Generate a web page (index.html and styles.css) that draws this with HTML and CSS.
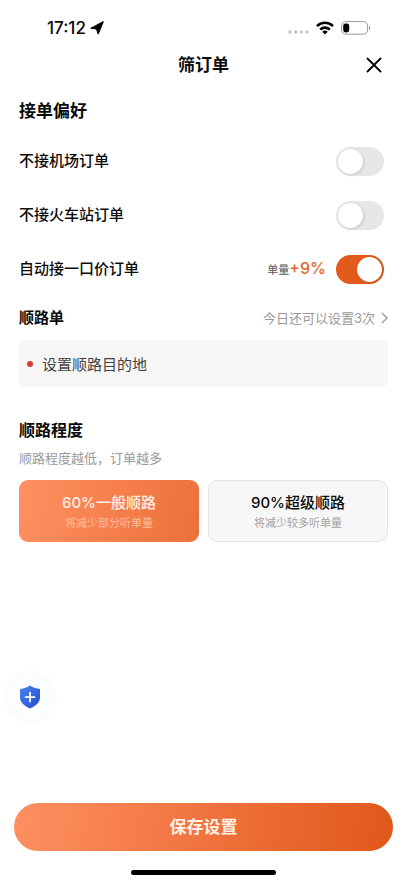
FILE: index.html
```html
<!DOCTYPE html>
<html lang="zh-CN">
<head>
<meta charset="utf-8">
<meta name="viewport" content="width=device-width, initial-scale=1">
<title>筛订单</title>
<link rel="stylesheet" href="styles.css">
</head>
<body>
<div class="screen">
  <div class="status">
    <div class="status-left">
      <span class="time">17:12</span>
      <svg class="location" width="14" height="14" viewBox="0 0 14 14" aria-hidden="true"><path d="M13.200.8 8.200 12.800 6.600 8 1 7.200z" fill="#000" stroke="#000" stroke-width="1.200" stroke-linejoin="round"/></svg>
    </div>
    <div class="status-right">
      <svg width="21" height="4" viewBox="0 0 21 4" aria-hidden="true"><g fill="#c6c6c6"><circle cx="2" cy="2" r="1.8"/><circle cx="7.7" cy="2" r="1.8"/><circle cx="13.3" cy="2" r="1.8"/><circle cx="19" cy="2" r="1.8"/></g></svg>
      <svg class="wifi" width="18" height="14" viewBox="0 0 18 14" aria-hidden="true"><g fill="none" stroke="#000" stroke-width="2.6"><path d="M1 5.1a11.3 11.3 0 0 1 16 0"/><path d="M4.200 8.600a6.800 6.800 0 0 1 9.600 0"/></g><path d="M9 13.6 6.3 10.8a3.8 3.8 0 0 1 5.4 0z"/></svg>
      <svg class="battery" width="30" height="14" viewBox="0 0 30 14" aria-hidden="true"><rect x=".6" y=".6" width="26" height="12.6" rx="4.2" fill="none" stroke="#999"/><rect x="2.2" y="2.4" width="6" height="9" rx="2.4"/><path d="M28 4.8c1.6.8 1.6 3.6 0 4.4z" fill="#888"/></svg>
    </div>
  </div>

  <header class="header">
    <h1>筛订单</h1>
    <button class="close" type="button" aria-label="关闭">
      <svg width="16" height="16" viewBox="0 0 16 16" aria-hidden="true"><path d="M1.5 1.5l13 13M14.5 1.5l-13 13" stroke="#000" stroke-width="1.8" stroke-linecap="round"/></svg>
    </button>
  </header>

  <main class="content">
    <h2 class="title-large">接单偏好</h2>
    <div class="row">
      <label for="airport">不接机场订单</label>
      <input class="switch" type="checkbox" id="airport">
    </div>
    <div class="row">
      <label for="station">不接火车站订单</label>
      <input class="switch" type="checkbox" id="station">
    </div>
    <div class="row">
      <label for="fixed">自动接一口价订单</label>
      <span class="bonus">单量<b>+9%</b></span>
      <input class="switch" type="checkbox" id="fixed" checked>
    </div>

    <div class="route-head">
      <h2>顺路单</h2>
      <a class="more" href="#">今日还可以设置3次
        <svg width="7" height="12" viewBox="0 0 7 12" aria-hidden="true"><path d="M1 1l5 5-5 5" fill="none" stroke="#999" stroke-width="1.4"/></svg>
      </a>
    </div>
    <button class="destination" type="button"><span class="dot"></span>设置顺路目的地</button>

    <h2 class="title-degree">顺路程度</h2>
    <p class="hint">顺路程度越低，订单越多</p>
    <div class="options" role="radiogroup" aria-label="顺路程度">
      <label class="option">
        <input type="radio" name="degree" checked>
        <span class="option-name">60%一般顺路</span>
        <span class="option-note">将减少部分听单量</span>
      </label>
      <label class="option">
        <input type="radio" name="degree">
        <span class="option-name">90%超级顺路</span>
        <span class="option-note">将减少较多听单量</span>
      </label>
    </div>
  </main>

  <button class="safety" type="button" aria-label="安全中心">
    <svg width="22" height="24" viewBox="0 0 22 24" aria-hidden="true">
      <defs><linearGradient id="shield" x1="0" y1="0" x2="1" y2="1"><stop offset="0" stop-color="#4a87ea"/><stop offset="1" stop-color="#2349d0"/></linearGradient></defs>
      <path d="M11 .6C13.4 2.5 17 3.7 21 4v8.5c0 5-4.5 8.8-10 11-5.5-2.2-10-6-10-11V4C5 3.7 8.6 2.5 11 .6z" fill="url(#shield)"/>
      <path d="M11 7.6v9M6.5 12.1h9" stroke="#fff" stroke-width="1.8" stroke-linecap="round"/>
    </svg>
  </button>

  <footer class="footer">
    <button class="save" type="button">保存设置</button>
    <div class="home-bar"></div>
  </footer>
</div>
</body>
</html>
```
FILE: styles.css
```css
* {
  box-sizing: border-box;
}

body {
  margin: 0;
  background: #fff;
  color: #0b0b0b;
  font-family: Inter, "Noto Sans CJK SC", sans-serif;
  font-size: 15px;
}

button {
  border: 0;
  padding: 0;
  font: inherit;
}

h1,
h2,
p {
  margin: 0;
}

h1,
h2 {
  font-weight: 600;
}

.screen {
  position: relative;
  display: flex;
  flex-direction: column;
  min-height: 100vh;
}

.status {
  display: flex;
  justify-content: space-between;
  align-items: center;
  height: 48px;
  padding: 8px 36px 0 47px;
}

.status-left,
.status-right {
  display: flex;
  align-items: center;
}

.status-left {
  gap: 4px;
}

.status-right {
  gap: 7px;
}

.status-right > :first-child {
  margin-top: 8px;
}

.time {
  font-size: 17px;
  font-weight: 500;
}

.header {
  display: grid;
  grid-template-columns: 1fr auto 1fr;
  align-items: center;
  height: 34px;
  padding: 0 20px;
}

h1 {
  grid-column: 2;
  font-size: 17px;
  line-height: 24px;
}

.close {
  display: grid;
  place-items: center;
  justify-self: end;
  width: 26px;
  height: 26px;
  background: none;
}

.content {
  padding: 17px 19px 24px;
}

h2 {
  font-size: 15px;
  line-height: 24px;
}

.title-large {
  margin-bottom: 11px;
  font-size: 17px;
}

.row {
  display: flex;
  align-items: center;
  gap: 10px;
  height: 54px;
  padding-right: 4px;
}

.row label {
  margin-right: auto;
  font-weight: 500;
  line-height: 24px;
}

.bonus {
  color: #555;
  font-size: 11px;
  line-height: 22px;
}

.bonus b {
  color: #e3682c;
  font-size: 16px;
  font-weight: 500;
}

.switch {
  appearance: none;
  display: flex;
  width: 48px;
  height: 29px;
  margin: 0;
  padding: 2px;
  border-radius: 15px;
  background: #e7e7e9;
}

.switch::before {
  content: "";
  width: 25px;
  height: 25px;
  border-radius: 50%;
  background: #fff;
  box-shadow: 1px 1px 3px rgba(0, 0, 0, 0.15);
}

.switch:checked {
  justify-content: flex-end;
  background: #e25b1c;
}

.route-head {
  display: flex;
  justify-content: space-between;
  align-items: center;
  height: 44px;
}

.more {
  display: flex;
  align-items: center;
  gap: 6px;
  color: #999;
  font-size: 13px;
  line-height: 20px;
  text-decoration: none;
}

.destination {
  display: flex;
  align-items: center;
  gap: 9px;
  width: 100%;
  height: 47px;
  padding: 0 8px;
  border-radius: 6px;
  background: #f6f6f6;
  color: #444;
}

.dot {
  width: 6px;
  height: 6px;
  border-radius: 50%;
  background: #d83c36;
}

.title-degree {
  margin-top: 31px;
  font-size: 16px;
}

.hint {
  margin-top: 6px;
  color: #999;
  font-size: 13px;
  line-height: 20px;
}

.options {
  display: grid;
  grid-template-columns: 1fr 1fr;
  gap: 9px;
  margin-top: 12px;
}

.option {
  display: flex;
  flex-direction: column;
  align-items: center;
  padding: 11px 0 9px;
  border: 1px solid #e4e4e4;
  border-radius: 9px;
  background: #f7f7f7;
}

.option input {
  appearance: none;
  width: 0;
  height: 0;
  margin: 0;
}

.option:has(:checked) {
  border-color: transparent;
  background: linear-gradient(100deg, #ff9062, #ed7039) border-box;
  color: #fff0e6;
}

.option-name {
  font-weight: 500;
  line-height: 22px;
}

.option-note {
  color: #a5a5a5;
  font-size: 11px;
  line-height: 18px;
}

.option:has(:checked) .option-note {
  color: #ffbd9c;
}

.safety {
  position: absolute;
  bottom: 163px;
  left: 7px;
  display: grid;
  place-items: center;
  width: 46px;
  height: 46px;
  border-radius: 50%;
  background: #fcfdff;
  box-shadow: 0 0 6px rgba(60, 80, 120, 0.06);
}

.footer {
  display: flex;
  flex-direction: column;
  align-items: center;
  gap: 19px;
  margin-top: auto;
  padding: 0 14px 8px;
}

.save {
  width: 100%;
  height: 48px;
  border-radius: 24px;
  background: linear-gradient(100deg, #ff9062, #e1571a);
  color: #fff0e6;
  font-size: 17px;
  font-weight: 600;
  line-height: 24px;
}

.home-bar {
  width: 145px;
  height: 5px;
  border-radius: 3px;
  background: #000;
}
```
